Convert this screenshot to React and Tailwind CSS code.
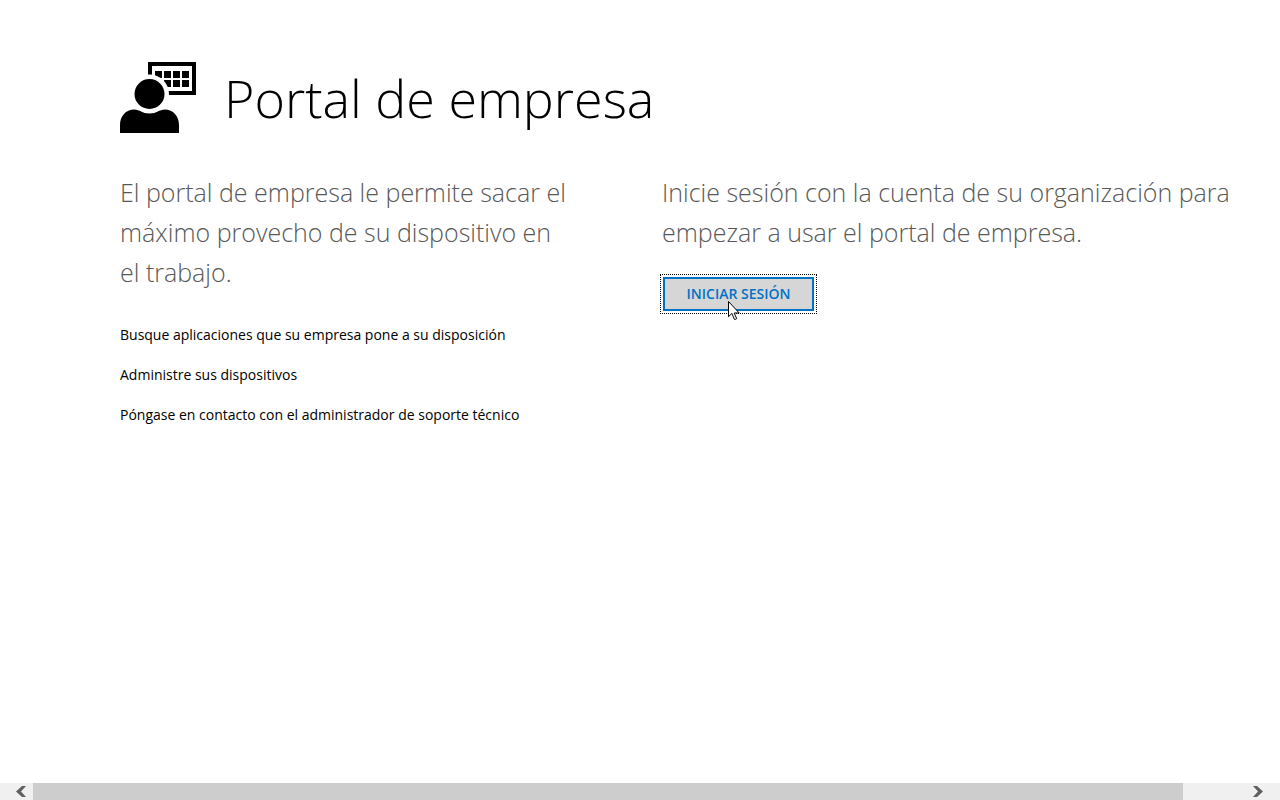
const features = [
  'Busque aplicaciones que su empresa pone a su disposición',
  'Administre sus dispositivos',
  'Póngase en contacto con el administrador de soporte técnico',
];

function PortalIcon() {
  return (
    <svg viewBox="0 0 76 71" className="h-[71px] w-[76px] shrink-0" aria-hidden="true">
      <path d="M28 0h48v33H28zM32 4v25h40V4z" fillRule="evenodd" />
      <path d="M35 9h7v7h-7zM44 9h7v7h-7zM53 9h7v7h-7zM62 9h7v7h-7zM35 18h7v7h-7zM44 18h7v7h-7zM53 18h7v7h-7zM62 18h7v7h-7z" />
      <circle cx="29.5" cy="32" r="19.5" fill="#fff" />
      <circle cx="29.5" cy="32" r="15" />
      <path d="M0 71V63C0 54 6 47.5 14 47.5C20 47.5 22 51.5 29.5 51.5C37 51.5 39 47.5 45 47.5C53 47.5 59 54 59 63V71Z" />
    </svg>
  );
}

function Pointer() {
  return (
    <svg viewBox="0 0 12 19" className="pointer-events-none absolute left-[65px] top-6 h-[19px] w-3" aria-hidden="true">
      <path d="M.5.5v15.2l3.4-3.3 2.5 6h.8l1.5-.7-2.5-5.7h5z" fill="#fff" stroke="#000" strokeWidth="1" />
    </svg>
  );
}

function ScrollBar() {
  return (
    <div className="flex h-[17px] bg-[#f0f0f0]">
      <button aria-label="Desplazar a la izquierda" className="flex w-[33px] items-center justify-center pl-2">
        <svg viewBox="0 0 10 11" className="h-[11px] w-[10px]" aria-hidden="true">
          <path d="M6 0h4L5 5.5l5 5.500H6L0 5.500z" fill="#606060" />
        </svg>
      </button>
      <div className="flex-1 bg-[#cdcdcd]" />
      <button aria-label="Desplazar a la derecha" className="flex w-[97px] items-center justify-end pr-[17px]">
        <svg viewBox="0 0 10 11" className="h-[11px] w-[10px]" aria-hidden="true">
          <path d="M4 0H0l5 5.500L0 11h4l6-5.500z" fill="#606060" />
        </svg>
      </button>
    </div>
  );
}

export default function App() {
  return (
    <div className="flex min-h-screen flex-col bg-white font-['Open_Sans',sans-serif] text-black">
      <main className="flex-1 pl-[120px] pr-10 pt-[62px]">
        <header className="flex gap-7">
          <PortalIcon />
          <h1 className="text-[52px] font-light leading-[71px]">Portal de empresa</h1>
        </header>
        <div className="mt-[39px] grid grid-cols-[minmax(0,542px)_1fr]">
          <section>
            <p className="max-w-[448px] text-[25px] font-light leading-10 text-[#585858]">
              El portal de empresa le permite sacar el máximo provecho de su dispositivo en el trabajo.
            </p>
            <ul className="mt-[23px] text-sm">
              {features.map((text) => (
                <li key={text} className="leading-10">{text}</li>
              ))}
            </ul>
          </section>
          <section>
            <p className="text-[25px] font-light leading-10 text-[#585858]">
              Inicie sesión con la cuenta de su organización para empezar a usar el portal de empresa.
            </p>
            <div className="relative ml-px mt-[25px] w-fit">
              <button className="block h-[34px] w-[151px] border-2 border-[#0072c6] bg-[#d6d6d6] text-sm font-semibold text-[#0072c6] outline-1 outline-offset-2 outline-dotted outline-black">
                INICIAR SESIÓN
              </button>
              <Pointer />
            </div>
          </section>
        </div>
      </main>
      <ScrollBar />
    </div>
  );
}
